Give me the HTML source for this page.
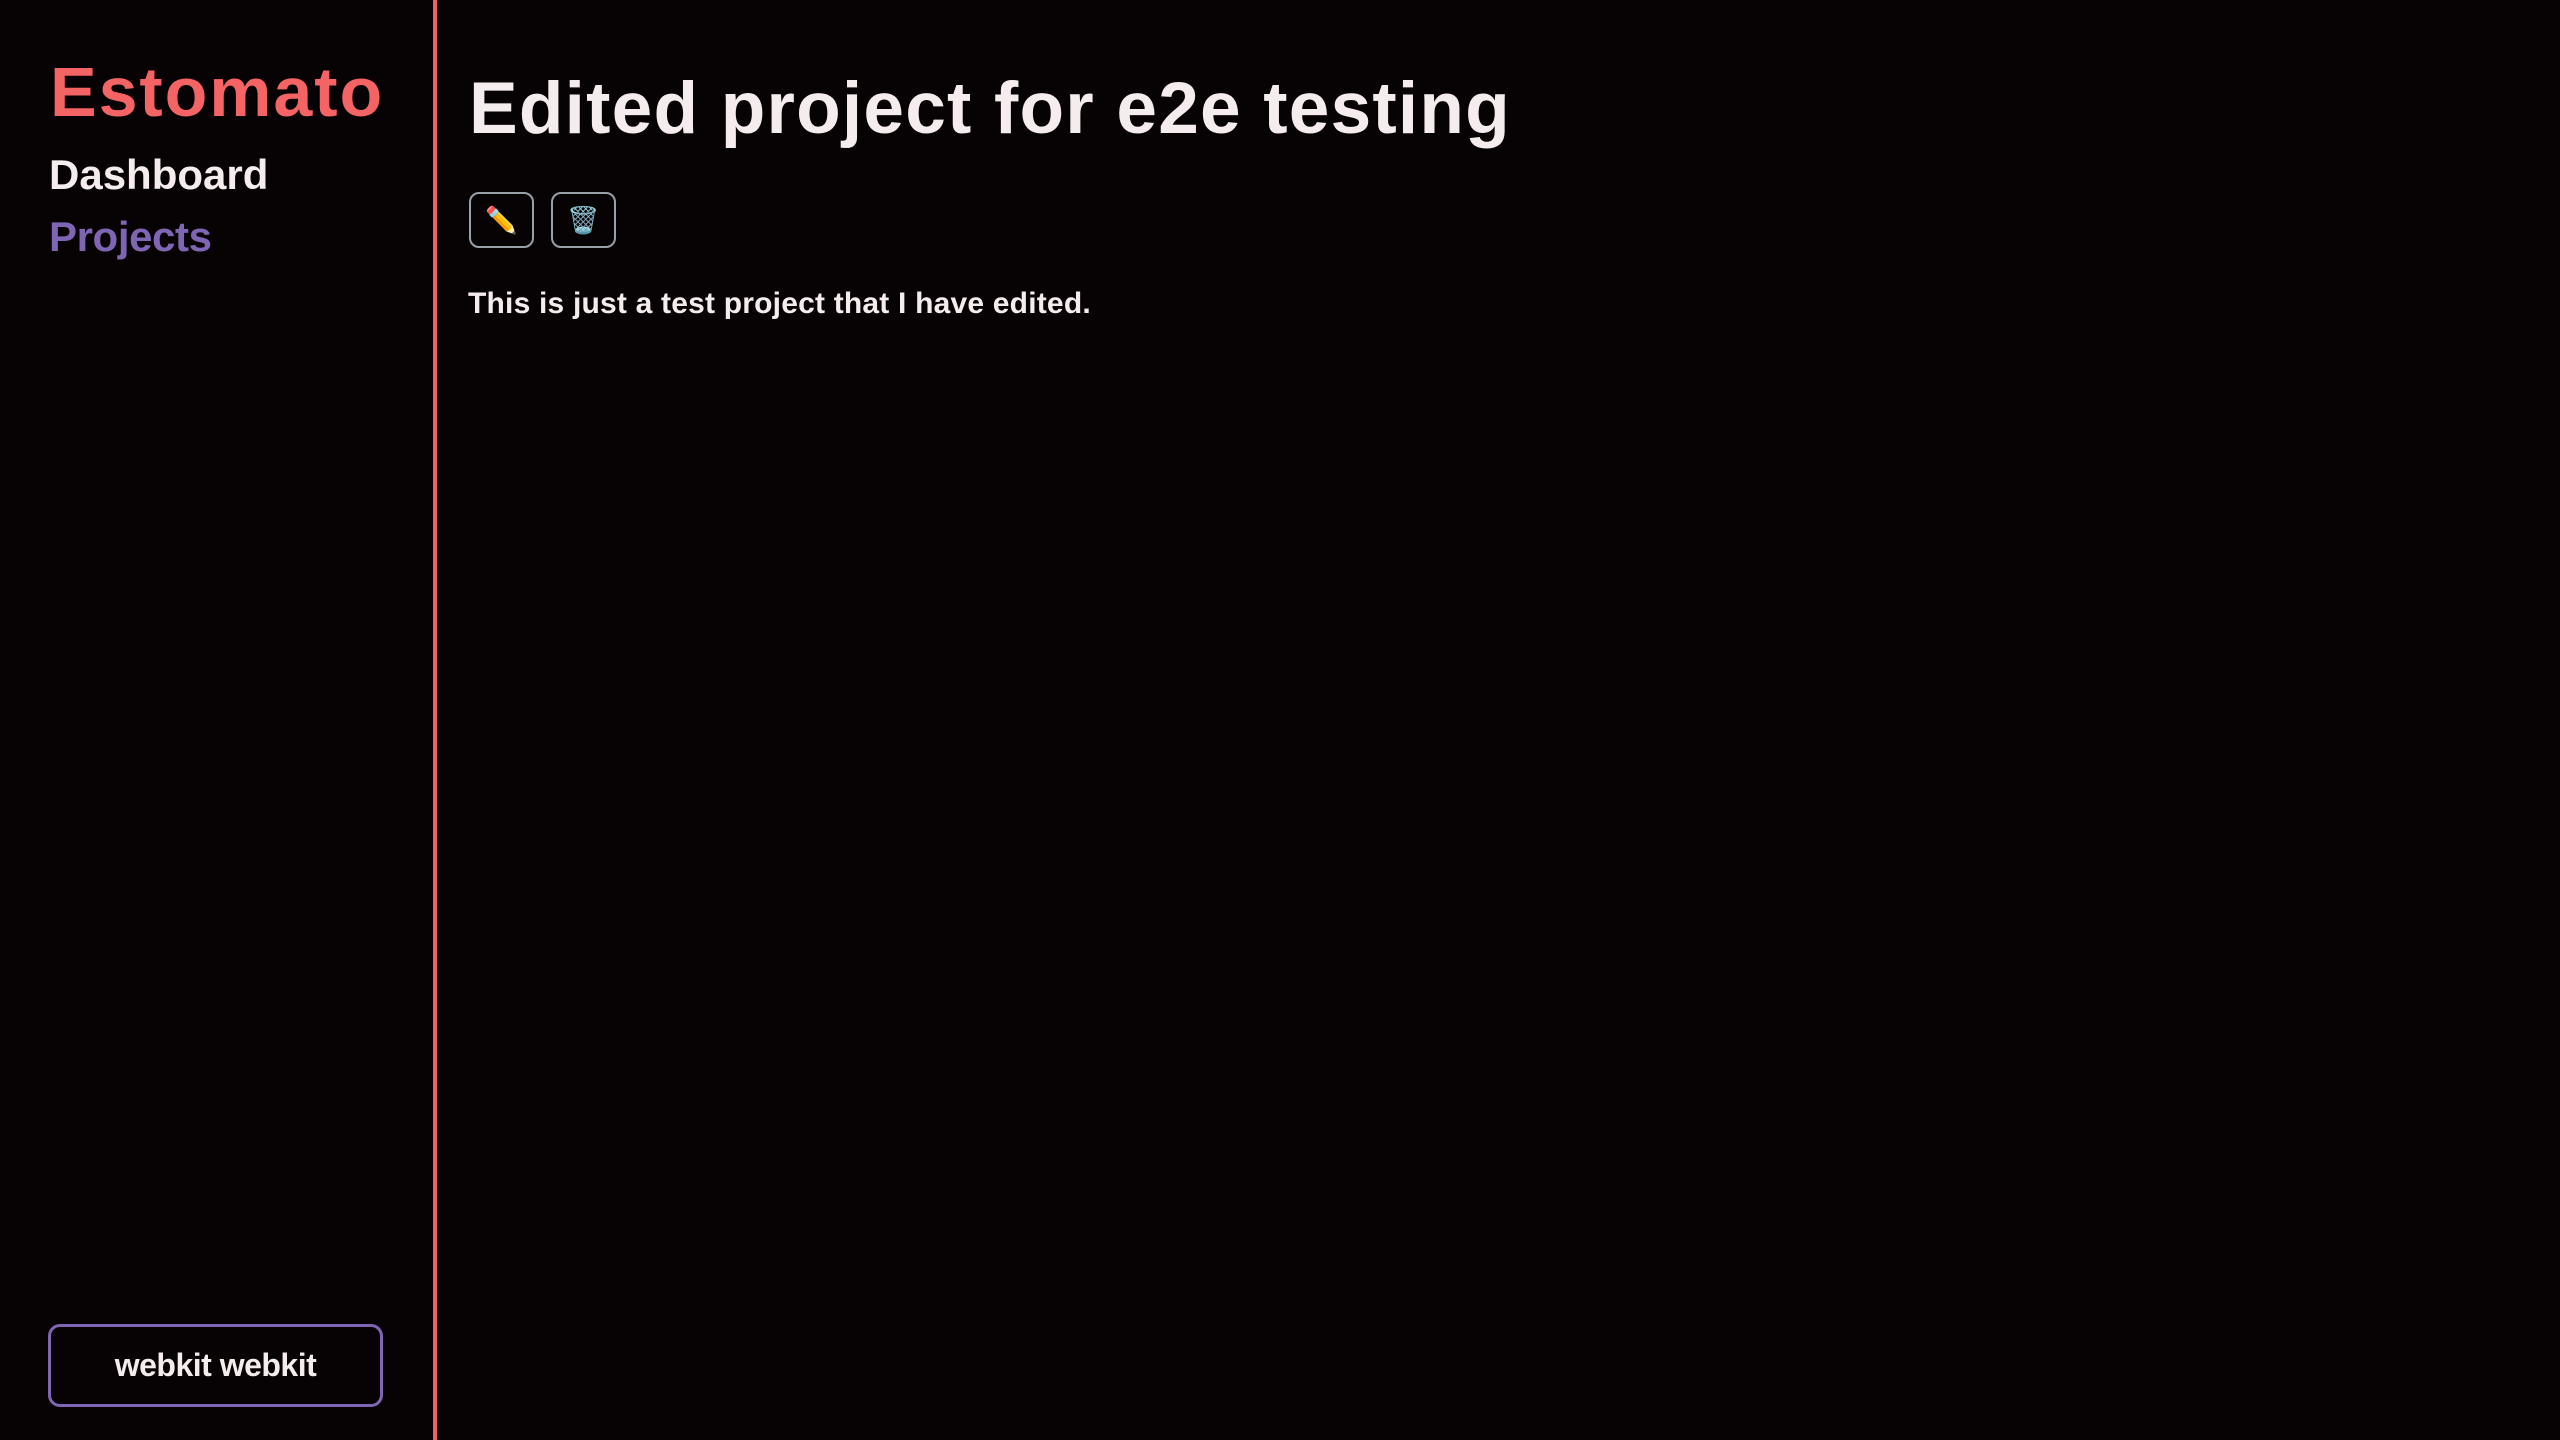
<!DOCTYPE html>
<html><head><meta charset="utf-8"><style>
*{margin:0;padding:0;box-sizing:border-box}
body{width:2560px;height:1440px;background:#070203;font-family:"Liberation Sans",sans-serif;color:#f5eced;position:relative;overflow:hidden}
.side{position:absolute;left:0;top:0;width:437px;height:1440px;border-right:4px solid #f06262}
.t{position:absolute;white-space:nowrap;font-weight:bold;transform-origin:left top}
.btn{position:absolute;top:192px;width:65px;height:56px;border:2px solid #9aa0a8;border-radius:10px;display:flex;align-items:center;justify-content:center;font-size:26px}
.user{position:absolute;left:48px;top:1324px;width:335px;height:83px;border:3px solid #7e66b4;border-radius:12px;display:flex;align-items:center;justify-content:center;font-size:32px;font-weight:bold;letter-spacing:-0.5px}
</style></head><body>
<div class="side"></div>
<div class="t" style="left:50px;top:52px;font-size:70px;color:#f46464;letter-spacing:1.9px">Estomato</div>
<div class="t" style="left:49px;top:151px;font-size:42px;letter-spacing:0px">Dashboard</div>
<div class="t" style="left:49px;top:213px;font-size:42px;color:#7e66b4;letter-spacing:-0.4px">Projects</div>
<div class="t" style="left:469px;top:67px;font-size:73px;letter-spacing:1.2px">Edited project for e2e testing</div>
<div class="btn" style="left:469px">✏️</div>
<div class="btn" style="left:551px">🗑️</div>
<div class="t" style="left:468px;top:287px;font-size:30px;letter-spacing:0.2px">This is just a test project that I have edited.</div>
<div class="user">webkit webkit</div>
</body></html>
